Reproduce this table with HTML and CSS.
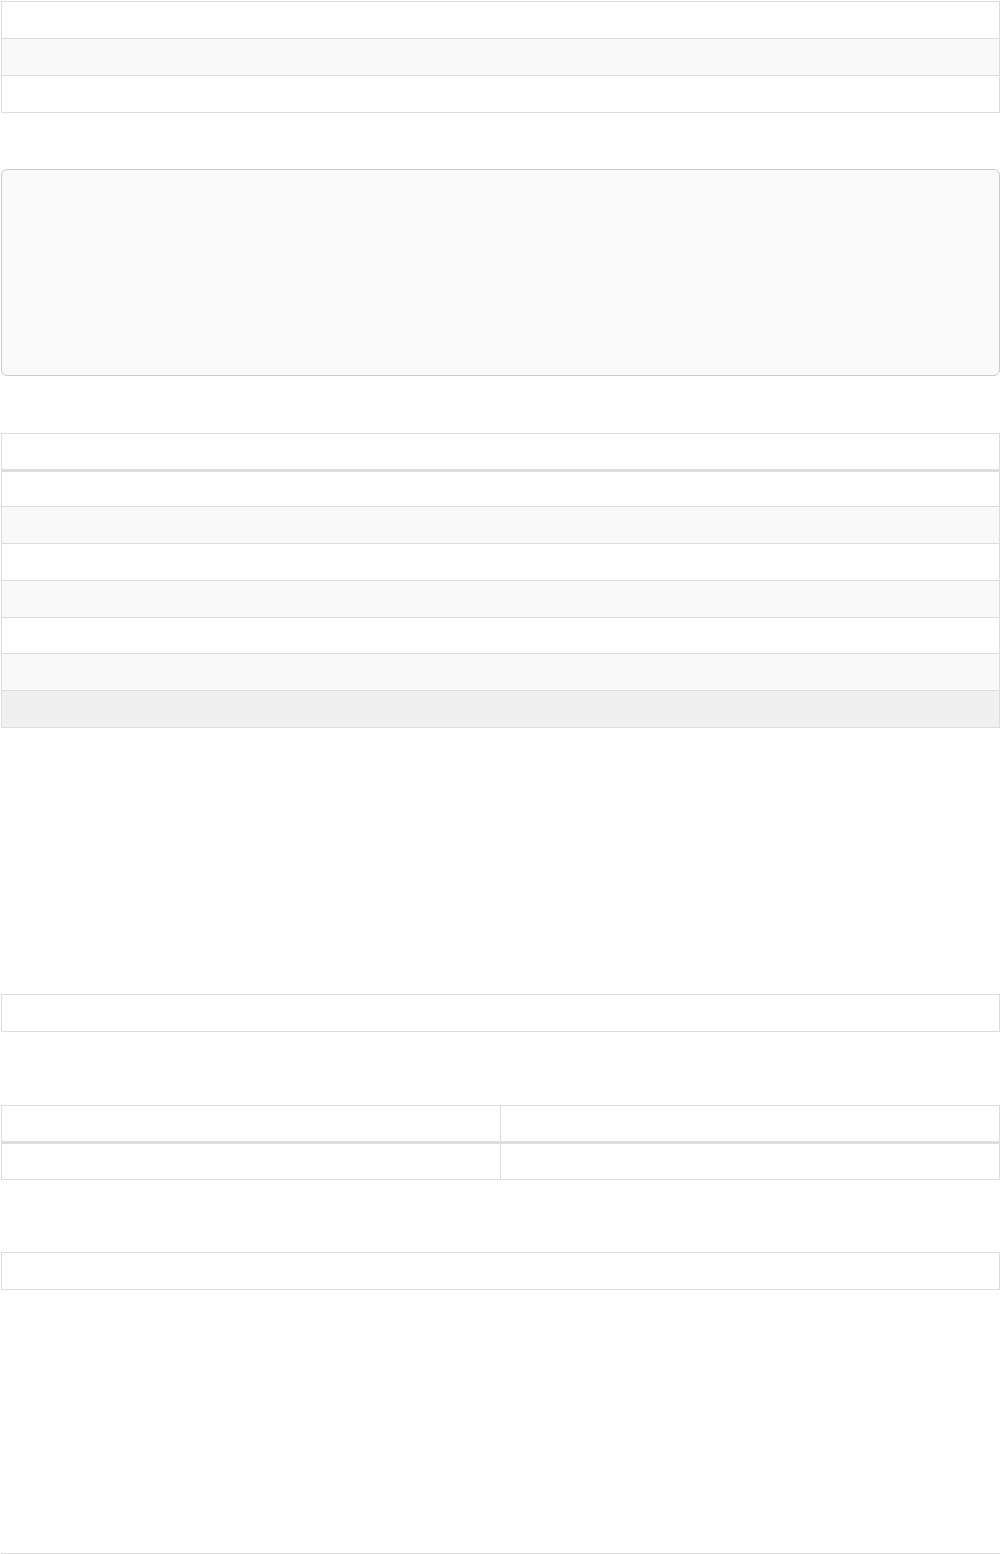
FILE: index.html
```html
<!DOCTYPE html>
<html lang="en">
<head>
<meta charset="utf-8">
<title>Tables</title>
<link rel="stylesheet" href="styles.css">
</head>
<body>
<main class="page">
  <section class="tbl t1">
    <div class="row"></div>
    <div class="row alt"></div>
    <div class="row"></div>
  </section>

  <pre class="code"></pre>

  <section class="tbl t3">
    <div class="row head"></div>
    <div class="row first short"></div>
    <div class="row alt"></div>
    <div class="row"></div>
    <div class="row alt"></div>
    <div class="row short"></div>
    <div class="row alt"></div>
    <div class="row active"></div>
  </section>

  <section class="tbl t4">
    <div class="row"></div>
  </section>

  <section class="tbl t5">
    <div class="row head split"><div class="cell"></div><div class="cell"></div></div>
    <div class="row first split"><div class="cell"></div><div class="cell"></div></div>
  </section>

  <section class="tbl t6">
    <div class="row"></div>
  </section>

  <section class="tbl t7">
    <div class="row"></div>
  </section>
</main>
</body>
</html>
```

FILE: styles.css
```css
html, body {
  margin: 0;
  padding: 0;
  overflow: hidden;
  background: #ffffff;
  font-family: "Liberation Sans", Arial, sans-serif;
  font-size: 14px;
  color: #333333;
}

.page {
  padding: 1px 0 0 1px;
  display: flex;
  flex-direction: column;
}

.tbl {
  border: 1px solid #dddddd;
  display: flex;
  flex-direction: column;
}

.row {
  height: 36px;
  border-top: 1px solid #dddddd;
  background: #ffffff;
}

.row:first-child {
  border-top: 0;
}

.row.head {
  height: 35px;
}

.row.first {
  border-top: 3px solid #dddddd;
  height: 35px;
}

.row.short {
  height: 35px;
}

.t3 .row.first {
  height: 34px;
}

.row.alt {
  background: #f9f9f9;
}

.row.active {
  background: #f0f0f0;
}

.split {
  display: grid;
  grid-template-columns: 499px 1fr;
}

.split .cell:first-child {
  border-right: 1px solid #dddddd;
}

.code {
  margin: 56px 0 0 0;
  height: 205px;
  padding: 0;
  border: 1px solid #cccccc;
  border-radius: 6px;
  background: #fafafa;
}

.t3 { margin-top: 57px; }
.t4 { margin-top: 266px; }
.t5 { margin-top: 73px; }
.t6 { margin-top: 72px; }
.t7 {
  margin-top: 263px;
  border-bottom: 0;
}
```
